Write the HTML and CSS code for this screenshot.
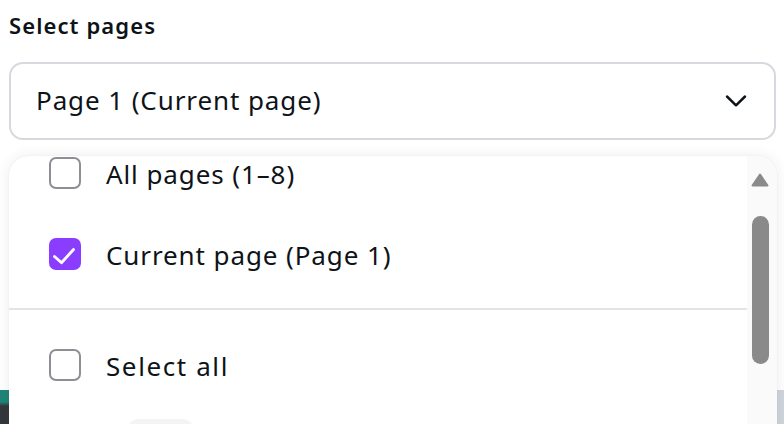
FILE: index.html
```html
<!DOCTYPE html>
<html>
<head>
<meta charset="utf-8">
<link rel="stylesheet" href="styles.css">
</head>
<body>
<div class="page">
  <div class="label">Select pages</div>
  <div class="select">
    <span class="select-text">Page 1 (Current page)</span>
    <svg class="chevron" width="24" height="24" viewBox="0 0 24 24"><path d="M3 7.5l9 8.8 9-8.8" fill="none" stroke="#0e1318" stroke-width="2.5" stroke-linecap="round" stroke-linejoin="round"/></svg>
  </div>
  <div class="backdrop-left"></div>
  <div class="backdrop-right"></div>
  <div class="menu">
    <div class="list">
      <div class="item first">
        <span class="box"></span>
        <span class="text">All pages (1–8)</span>
      </div>
      <div class="item second">
        <span class="box checked"><svg width="32" height="32" viewBox="0 0 32 32"><path d="M5.5 18.5l7 6.3L24.5 11.5" fill="none" stroke="#fff" stroke-width="2.8" stroke-linecap="round" stroke-linejoin="round"/></svg></span>
        <span class="text">Current page (Page 1)</span>
      </div>
      <div class="divider"></div>
      <div class="item third">
        <span class="box"></span>
        <span class="text wide">Select all</span>
      </div>
      <div class="pill"></div>
    </div>
    <div class="scrollbar">
      <svg class="arrow" width="18" height="14" viewBox="0 0 18 14"><path d="M9 1.5L16.5 12.5H1.5Z" fill="#8a8a8a" stroke="#8a8a8a" stroke-width="2" stroke-linejoin="round"/></svg>
      <div class="thumb"></div>
    </div>
  </div>
</div>
</body>
</html>
```

FILE: styles.css
```css
* { box-sizing: border-box; }
html, body { margin: 0; padding: 0; }
body {
  width: 784px;
  height: 424px;
  overflow: hidden;
  background: #ffffff;
  font-family: "Noto Sans", "Open Sans", sans-serif;
  color: #0e1318;
}
.page {
  position: relative;
  width: 784px;
  height: 424px;
  padding: 9px 8px 0 9px;
}
.label {
  font-size: 22px;
  font-weight: 600;
  line-height: 32px;
  letter-spacing: 1.1px;
}
.select {
  margin-top: 21px;
  height: 78px;
  border: 2px solid #d6d9dd;
  border-radius: 14px;
  display: flex;
  align-items: center;
  justify-content: space-between;
  padding: 0 26px 0 25px;
}
.select-text {
  font-size: 26px;
  line-height: 34px;
  letter-spacing: 0.9px;
  margin-top: -3px;
}
.chevron { margin-top: -1px; }
.backdrop-left {
  position: absolute;
  left: 0;
  top: 390px;
  width: 9px;
  height: 34px;
  background: linear-gradient(#1f8577 0, #1f8577 12px, #34373b 16px, #34373b 100%);
}
.backdrop-right {
  position: absolute;
  right: 0;
  top: 390px;
  width: 7px;
  height: 34px;
  background: #d0d4dc;
}
.menu {
  position: absolute;
  left: 9px;
  top: 156px;
  width: 768px;
  height: 290px;
  background: #ffffff;
  border-radius: 20px 20px 0 0;
  box-shadow: 0 0 14px rgba(30, 40, 60, 0.09), 0 0 2px rgba(30, 40, 60, 0.06);
  display: flex;
  overflow: hidden;
}
.list {
  flex: 1;
  display: flex;
  flex-direction: column;
}
.item {
  display: flex;
  align-items: center;
  height: 32px;
  padding-left: 40px;
  flex: none;
}
.item.first { margin-top: 1px; }
.item.second { margin-top: 49px; }
.item.third { margin-top: 39px; }
.box {
  width: 32px;
  height: 32px;
  border: 2px solid #8c8f93;
  border-radius: 7px;
  flex: none;
  display: flex;
  align-items: center;
  justify-content: center;
}
.box.checked {
  background: #8b3dff;
  border-color: #8b3dff;
}
.box.checked svg { flex: none; margin: -2px; }
.text {
  margin-left: 25px;
  font-size: 26px;
  line-height: 32px;
  letter-spacing: 0.9px;
  margin-top: 2px;
  white-space: nowrap;
}
.text.wide { letter-spacing: 1.6px; }
.divider {
  height: 2px;
  background: #e2e4e8;
  margin-top: 38px;
  flex: none;
}
.pill {
  margin: 38px 0 0 119px;
  width: 65px;
  height: 20px;
  border-radius: 10px;
  background: #f3f4f6;
  flex: none;
}
.scrollbar {
  width: 30px;
  flex: none;
  background: #fafafa;
  display: flex;
  flex-direction: column;
  align-items: center;
  padding-top: 17px;
  padding-right: 4px;
}
.arrow { display: block; }
.thumb {
  margin-top: 29px;
  width: 17px;
  height: 148px;
  border-radius: 9px;
  background: #8a8a8a;
}
```
